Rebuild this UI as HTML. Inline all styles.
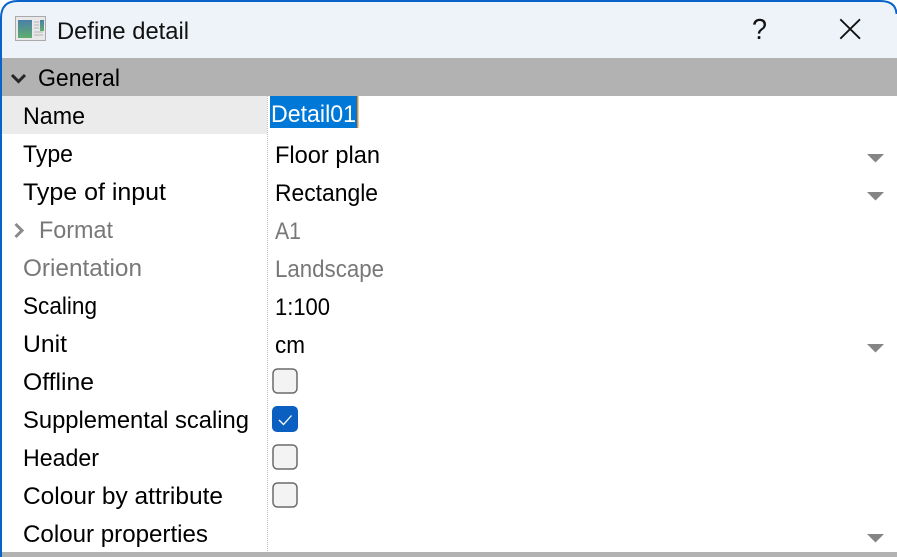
<!DOCTYPE html>
<html>
<head>
<meta charset="utf-8">
<style>
html,body{margin:0;padding:0;width:897px;height:557px;overflow:hidden;background:#fff}
svg{display:block}
text{font-family:"Liberation Sans",sans-serif;font-size:24px;fill:#000}
.d{fill:#787878}
</style>
</head>
<body>
<svg width="897" height="557" viewBox="0 0 897 557" xmlns="http://www.w3.org/2000/svg">
<defs>
<linearGradient id="g" x1="0" y1="0" x2="0" y2="1"><stop offset="0" stop-color="#4a7fa8"/><stop offset="1" stop-color="#5fae6e"/></linearGradient>
</defs>
<rect width="897" height="557" fill="#fff"/>
<path d="M0 58V18Q0 2 16 2H881Q897 2 897 18V58Z" fill="#eef3f9"/>
<path d="M1 557V18Q1 1 18 1H880Q896 1 896.5 14" fill="none" stroke="#0a63c9" stroke-width="2"/>
<rect x="2" y="58" width="895" height="38" fill="#b2b2b2"/>
<rect x="2" y="96" width="265" height="38" fill="#ebebeb"/>
<rect x="2" y="552" width="895" height="5" fill="#b2b2b2"/>
<line x1="267.500" y1="96" x2="267.500" y2="552" stroke="#bdbdbd" stroke-dasharray="1 1"/>

<!-- title icon -->
<rect x="15.500" y="16.500" width="30" height="24" fill="#e8e8e8" stroke="#aaa"/>
<rect x="18" y="20" width="14" height="18" fill="url(#g)"/>
<rect x="40" y="20" width="4" height="11" fill="url(#g)"/>
<path d="M34 22h5M34 25h5M34 28h5M34 32h9M34 35h9" stroke="#b5b5b5" stroke-width="1"/>

<text x="57" y="39" textLength="132" lengthAdjust="spacingAndGlyphs" style="fill:#111">Define detail</text>
<text x="752" y="39" textLength="15" lengthAdjust="spacingAndGlyphs" style="fill:#111;font-size:29px">?</text>
<path d="M840.300 19.300L860 38.700M860 19.300L840.300 38.700" stroke="#111" stroke-width="1.800" fill="none"/>

<path d="M12 75L18.500 81.500L25 75" fill="none" stroke="#262626" stroke-width="3"/>
<text x="38" y="86" textLength="82" lengthAdjust="spacingAndGlyphs">General</text>

<text x="23" y="124" textLength="62" lengthAdjust="spacingAndGlyphs">Name</text>
<text x="23" y="162" textLength="50" lengthAdjust="spacingAndGlyphs">Type</text>
<text x="23" y="200" textLength="143" lengthAdjust="spacingAndGlyphs">Type of input</text>
<path d="M15.500 224L22 230.500L15.500 237" fill="none" stroke="#8a8a8a" stroke-width="3"/>
<text class="d" x="39" y="238" textLength="74" lengthAdjust="spacingAndGlyphs">Format</text>
<text class="d" x="23" y="276" textLength="119" lengthAdjust="spacingAndGlyphs">Orientation</text>
<text x="23" y="314" textLength="74" lengthAdjust="spacingAndGlyphs">Scaling</text>
<text x="23" y="352" textLength="44" lengthAdjust="spacingAndGlyphs">Unit</text>
<text x="23" y="390" textLength="71" lengthAdjust="spacingAndGlyphs">Offline</text>
<text x="23" y="428" textLength="226" lengthAdjust="spacingAndGlyphs">Supplemental scaling</text>
<text x="23" y="466" textLength="76" lengthAdjust="spacingAndGlyphs">Header</text>
<text x="23" y="504" textLength="200" lengthAdjust="spacingAndGlyphs">Colour by attribute</text>
<text x="23" y="542" textLength="185" lengthAdjust="spacingAndGlyphs">Colour properties</text>

<!-- values -->
<rect x="270" y="96" width="87" height="32" fill="#0078d7"/>
<rect x="357" y="96" width="1.500" height="32" fill="#f08a24"/>
<text x="271" y="122" textLength="85" lengthAdjust="spacingAndGlyphs" style="fill:#fff">Detail01</text>
<text x="275" y="163" textLength="105" lengthAdjust="spacingAndGlyphs">Floor plan</text>
<text x="275" y="201" textLength="103" lengthAdjust="spacingAndGlyphs">Rectangle</text>
<text class="d" x="275" y="239" textLength="26" lengthAdjust="spacingAndGlyphs">A1</text>
<text class="d" x="275" y="277" textLength="109" lengthAdjust="spacingAndGlyphs">Landscape</text>
<text x="275" y="315" textLength="55" lengthAdjust="spacingAndGlyphs">1:100</text>
<text x="275" y="353" textLength="30" lengthAdjust="spacingAndGlyphs">cm</text>

<!-- dropdown arrows -->
<path d="M867 154H884L875.500 162.500Z" fill="#858585"/>
<path d="M867 192H884L875.500 200.500Z" fill="#858585"/>
<path d="M867 344H884L875.500 352.500Z" fill="#858585"/>
<path d="M867 534H884L875.500 542.500Z" fill="#858585"/>

<!-- checkboxes -->
<rect x="273" y="369" width="24" height="24" rx="4.500" fill="#f3f3f3" stroke="#6a6a6a" stroke-width="1.500"/>
<rect x="272" y="406" width="26" height="26" rx="5" fill="#0a5fc0"/>
<path d="M279 420L283.500 424.500L291.500 415.500" fill="none" stroke="#fff" stroke-width="1.300"/>
<rect x="273" y="445" width="24" height="24" rx="4.500" fill="#f3f3f3" stroke="#6a6a6a" stroke-width="1.500"/>
<rect x="273" y="483" width="24" height="24" rx="4.500" fill="#f3f3f3" stroke="#6a6a6a" stroke-width="1.500"/>
</svg>
</body>
</html>
